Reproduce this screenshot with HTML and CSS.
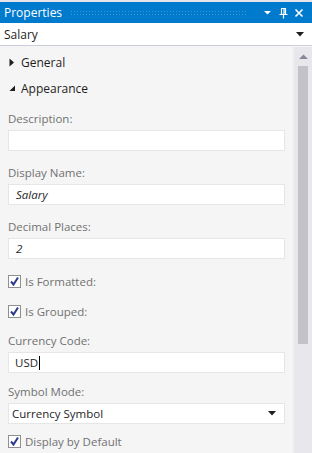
FILE: index.html
```html
<!DOCTYPE html>
<html>
<head>
<meta charset="utf-8">
<link rel="stylesheet" href="styles.css">
</head>
<body>
<div class="window">
  <div class="titlebar">
    <span class="title">Properties</span>
    <span class="grip"></span>
    <svg class="tb-icon" width="9" height="9" viewBox="0 0 9 9"><path d="M1 3 H8 L4.5 6.5 Z" fill="#fff"/></svg>
    <svg class="tb-icon" width="10" height="12" viewBox="0 0 10 12"><path d="M3 1.5 H8 M3.5 1.5 V7 M7.5 1.5 V7 M1.5 7.5 H9.5 M5.5 7.5 V11.5 M6 2 V7" stroke="#fff" stroke-width="1.2" fill="none"/></svg>
    <svg class="tb-icon" width="10" height="10" viewBox="0 0 10 10"><path d="M1.5 1.5 L8.5 8.5 M8.5 1.5 L1.5 8.5" stroke="#fff" stroke-width="1.6"/></svg>
  </div>
  <div class="selector">
    <span>Salary</span>
    <svg width="8" height="5" viewBox="0 0 8 5"><path d="M0 0 H8 L4 4.5 Z" fill="#1e1e1e"/></svg>
  </div>
  <div class="main">
    <div class="content">
      <div class="group-row">
        <svg class="exp" width="8" height="9" viewBox="0 0 8 9"><path d="M1.5 0.5 L6 4.5 L1.5 8.5 Z" fill="#1e1e1e"/></svg>
        <span>General</span>
      </div>
      <div class="group-row">
        <svg class="exp" width="8" height="9" viewBox="0 0 8 9"><path d="M7 1.5 V7 H1.5 Z" fill="#1e1e1e"/></svg>
        <span>Appearance</span>
      </div>
      <div class="sections">
        <div class="field">
          <div class="label">Description:</div>
          <div class="input"></div>
        </div>
        <div class="field">
          <div class="label">Display Name:</div>
          <div class="input italic">Salary</div>
        </div>
        <div class="field">
          <div class="label">Decimal Places:</div>
          <div class="input italic">2</div>
        </div>
        <div class="check">
          <span class="box"><svg width="11" height="11" viewBox="0 0 11 11"><path d="M2 5.5 L4.5 8.5 L9 1.5" stroke="#2e3a8e" stroke-width="2" fill="none"/></svg></span>
          <span>Is Formatted:</span>
        </div>
        <div class="check">
          <span class="box"><svg width="11" height="11" viewBox="0 0 11 11"><path d="M2 5.5 L4.5 8.5 L9 1.5" stroke="#2e3a8e" stroke-width="2" fill="none"/></svg></span>
          <span>Is Grouped:</span>
        </div>
        <div class="field field-tight">
          <div class="label">Currency Code:</div>
          <div class="input">USD<span class="caret"></span></div>
        </div>
        <div class="field field-last">
          <div class="label">Symbol Mode:</div>
          <div class="input select"><span>Currency Symbol</span><svg width="8" height="5" viewBox="0 0 8 5"><path d="M0 0 H8 L4 4.5 Z" fill="#1e1e1e"/></svg></div>
        </div>
        <div class="check">
          <span class="box"><svg width="11" height="11" viewBox="0 0 11 11"><path d="M2 5.5 L4.5 8.5 L9 1.5" stroke="#2e3a8e" stroke-width="2" fill="none"/></svg></span>
          <span>Display by Default</span>
        </div>
      </div>
    </div>
    <div class="scrollbar">
      <svg class="sb-arrow" width="9" height="5" viewBox="0 0 9 5"><path d="M0 5 H9 L4.5 0.5 Z" fill="#868999"/></svg>
      <div class="thumb"></div>
    </div>
  </div>
</div>
</body>
</html>
```
FILE: styles.css
```css
html, body {
  margin: 0;
  padding: 0;
}
body {
  font-family: "Open Sans", "Noto Sans", sans-serif;
  font-size: 11.5px;
  color: #1e1e1e;
  background: #f5f5f5;
}
.window {
  width: 312px;
  height: 453px;
  overflow: hidden;
  border-top: 2px solid #e6e6ea;
  box-sizing: border-box;
  display: flex;
  flex-direction: column;
}
.titlebar {
  height: 21px;
  background: #007acc;
  color: #fff;
  display: flex;
  align-items: center;
  padding: 0 8px 0 4px;
  flex-shrink: 0;
}
.title {
  font-size: 12px;
}
.grip {
  flex: 1;
  height: 5px;
  margin: 0 10px 0 8px;
  background-image: radial-gradient(circle, #3f97d4 0.7px, transparent 0.9px);
  background-size: 3px 3px;
  background-position: 0 0;
}
.tb-icon {
  margin-left: 6px;
}
.selector {
  height: 22px;
  background: #fff;
  border-bottom: 1px solid #cccedb;
  display: flex;
  align-items: center;
  justify-content: space-between;
  padding: 0 8px 0 4px;
  flex-shrink: 0;
  font-size: 12px;
}
.main {
  flex: 1;
  display: flex;
  min-height: 0;
  margin-top: 1px;
}
.content {
  flex: 1;
  background: #f5f5f5;
  padding: 2px 7px 0 8px;
}
.group-row {
  height: 26px;
  display: flex;
  align-items: center;
  font-size: 12px;
  color: #1e1e1e;
}
.exp {
  margin-right: 5px;
}
.sections {
  margin-top: 7px;
}
.field {
  margin-bottom: 11px;
}
.field-tight {
  margin-bottom: 8px;
}
.field-last {
  margin-bottom: 6px;
}
.label {
  height: 22px;
  line-height: 22px;
  color: #717171;
}
.input {
  height: 21px;
  box-sizing: border-box;
  background: #fff;
  border: 1px solid #e6e6e6;
  padding-left: 6px;
  line-height: 19px;
  color: #1e1e1e;
  display: flex;
  align-items: center;
}
.italic {
  font-style: italic;
  padding-left: 7px;
}
.caret {
  display: inline-block;
  width: 1px;
  height: 14px;
  background: #000;
  margin-left: 1px;
}
.select {
  justify-content: space-between;
  padding: 0 8px 0 3px;
}
.check {
  height: 22px;
  display: flex;
  align-items: center;
  color: #717171;
  margin-bottom: 8px;
}
.box {
  width: 13px;
  height: 13px;
  box-sizing: border-box;
  border: 1px solid #8e8f8f;
  background: #fff;
  display: inline-flex;
  align-items: center;
  justify-content: center;
  margin-right: 4px;
}
.scrollbar {
  width: 18px;
  background: #e8e8ec;
  border-left: 2px solid #f0f0f2;
  display: flex;
  flex-direction: column;
  align-items: center;
}
.sb-arrow {
  margin-top: 7px;
}
.thumb {
  width: 10px;
  height: 278px;
  margin-top: 7px;
  background: #c2c3c9;
}
```
